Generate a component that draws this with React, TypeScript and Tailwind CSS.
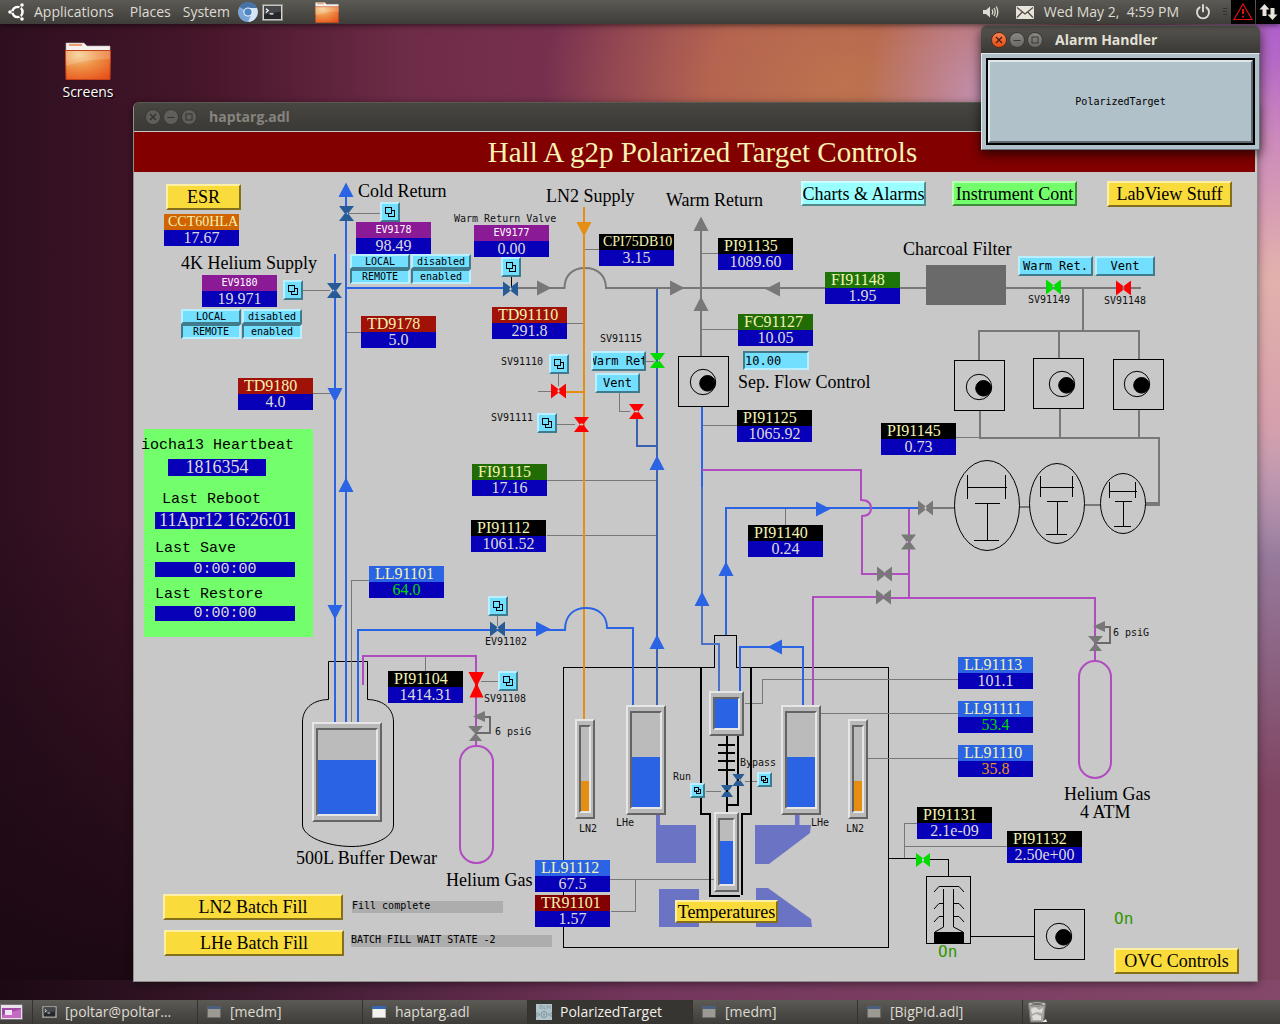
import React from "react";

const SERIF = "font-['Liberation_Serif',serif]";
const MONO = "font-['DejaVu_Sans_Mono',monospace]";
const UI = "font-['Open_Sans','Noto_Sans',sans-serif]";

const BLUE = "#2a63e4";
const DEEP = "#3a60b4";
const MID = "#4a70c8";
const NAVY = "#285a96";
const GRAY = "#787878";
const ORANGE = "#e48f14";
const MAGENTA = "#b04bc0";

/* ---------- window chrome ---------- */

function WindowDots({ active }: { active?: boolean }) {
  const grey = active
    ? "border-[#3a3935] bg-gradient-to-b from-[#8a8882] to-[#6b6963] text-[#3a3935]"
    : "border-[#3a3935] bg-[#5f5e59] text-[#33322e]";
  const close = active
    ? "border-[#5a2a18] bg-gradient-to-b from-[#f4804f] to-[#e2500f] text-[#4a1a08]"
    : grey;
  const dot = "flex size-4 items-center justify-center rounded-full border";
  return (
    <div className="flex gap-0.5">
      <button aria-label="Close" className={`${dot} ${close}`}>
        <svg width="8" height="8" viewBox="0 0 8 8" stroke="currentColor" strokeWidth="1.3">
          <path d="M1 1L7 7M7 1L1 7" />
        </svg>
      </button>
      <button aria-label="Minimize" className={`${dot} ${grey}`}>
        <svg width="8" height="8" viewBox="0 0 8 8" stroke="currentColor">
          <path d="M0.5 4.5H7.5" />
        </svg>
      </button>
      <button aria-label="Maximize" className={`${dot} ${grey}`}>
        <svg width="8" height="8" viewBox="0 0 8 8" fill="none" stroke="currentColor">
          <rect x="1" y="1" width="6" height="6" />
        </svg>
      </button>
    </div>
  );
}

/* ---------- panel icons ---------- */

function UbuntuLogo() {
  return (
    <svg width="18" height="18" viewBox="0 0 18 18" fill="none">
      <circle cx="9.5" cy="9" r="5" stroke="#fff" strokeWidth="2.6" />
      <path d="M9.5 9L3 9M9.5 9L12.8 3.3M9.5 9L12.8 14.7" stroke="#4b4a46" strokeWidth="1.4" />
      <circle cx="9.5" cy="9" r="3.4" fill="#4b4a46" />
      <circle cx="2" cy="9" r="1.8" fill="#fff" />
      <circle cx="14" cy="2" r="1.8" fill="#fff" />
      <circle cx="14" cy="16" r="1.8" fill="#fff" />
    </svg>
  );
}

function ChromiumIcon() {
  return (
    <svg width="20" height="20" viewBox="0 0 20 20">
      <circle cx="10" cy="10" r="9.8" fill="#8fb6e0" />
      <path d="M10 10L1.5 5A9.8 9.8 0 0 1 19 6H10Z" fill="#4673a8" />
      <path d="M10 6H19A9.8 9.8 0 0 1 10 19.8L13.5 12Z" fill="#d2e4f6" />
      <path d="M1.5 5A9.8 9.8 0 0 0 10 19.8L13 13L7 12.5Z" fill="#79a5d6" />
      <circle cx="10" cy="10" r="4.6" fill="#e9f2fb" />
      <circle cx="10" cy="10" r="3.6" fill="#4f86c6" />
    </svg>
  );
}

function TerminalIcon({ w, h }: { w: number; h: number }) {
  return (
    <svg width={w} height={h} viewBox="0 0 22 18">
      <rect x="0.5" y="0.5" width="21" height="17" fill="#d9d9d6" stroke="#8b8b88" />
      <rect x="2" y="2" width="18" height="14" fill="#26272a" />
      <path d="M2 2H20V8L2 11Z" fill="#45474b" />
      <path d="M4 5L6.5 7L4 9M8 10.5H12" stroke="#fff" strokeWidth="1.2" fill="none" />
    </svg>
  );
}

function FolderIcon({ w, h }: { w: number; h: number }) {
  return (
    <svg width={w} height={h} viewBox="0 0 46 38" preserveAspectRatio="none">
      <defs>
        <radialGradient id="folder" cx="0.3" cy="0.15" r="1">
          <stop offset="0" stopColor="#f6cd8e" />
          <stop offset="0.45" stopColor="#ee8f45" />
          <stop offset="1" stopColor="#e8501a" />
        </radialGradient>
      </defs>
      <path d="M1 20V1H19L22 4H45V20Z" fill="#f4f1ee" stroke="#b9b2ac" strokeWidth="0.6" />
      <rect x="4" y="2" width="13" height="2" fill="#ef9c6c" />
      <path d="M0.5 8.5H45.5L45 37.5H1Z" fill="url(#folder)" stroke="#c4421a" />
      <path d="M1 9H45V17Q22 17 1 24Z" fill="#fff" opacity="0.18" />
    </svg>
  );
}

function VolumeIcon() {
  return (
    <svg width="18" height="14" viewBox="0 0 18 14" fill="none" stroke="#dfdbd2">
      <path d="M1 5H4L8 1.5V12.5L4 9H1Z" fill="#dfdbd2" stroke="none" />
      <path d="M10 4.5Q11.5 7 10 9.5M12 3Q14.4 7 12 11M14.2 1.5Q17.4 7 14.2 12.5" strokeWidth="1.3" />
    </svg>
  );
}

function MailIcon() {
  return (
    <svg width="18" height="13" viewBox="0 0 18 13">
      <rect width="18" height="13" rx="1" fill="#e8e4da" />
      <path d="M1 1.5L9 8L17 1.5M1 11.5L6.3 6M17 11.5L11.7 6" stroke="#4b4a46" strokeWidth="1.2" fill="none" />
    </svg>
  );
}

function PowerIcon() {
  return (
    <svg width="16" height="16" viewBox="0 0 16 16" fill="none" stroke="#dfdbd2" strokeWidth="1.9">
      <path d="M4.6 3.4A6 6 0 1 0 11.4 3.4M8 1V7.5" strokeLinecap="round" />
    </svg>
  );
}

function TopPanel() {
  return (
    <header className={`${UI} relative z-20 flex h-6 shrink-0 items-center bg-gradient-to-b from-[#5b5a55] to-[#3e3d39] text-sm text-[#dfdbd2] shadow-[0_1px_6px_rgba(0,0,0,0.6)]`}>
      <nav className="flex items-center pl-2">
        <UbuntuLogo />
        <button className="ml-2">Applications</button>
        <button className="ml-4">Places</button>
        <button className="ml-3">System</button>
        <button className="ml-2" aria-label="Chromium"><ChromiumIcon /></button>
        <button className="ml-1" aria-label="Terminal"><TerminalIcon w={21} h={17} /></button>
        <button className="ml-8" aria-label="File manager"><FolderIcon w={24} h={21} /></button>
      </nav>
      <div className="ml-auto flex items-center">
        <button aria-label="Volume"><VolumeIcon /></button>
        <button className="ml-4" aria-label="Mail"><MailIcon /></button>
        <time className="ml-2.5 whitespace-pre">Wed May 2,  4:59 PM</time>
        <button className="ml-4" aria-label="Power"><PowerIcon /></button>
        <svg className="ml-3" width="4" height="10" viewBox="0 0 4 10" stroke="#33322e">
          <path d="M0 1.5H4M0 4.5H4M0 7.5H4" />
        </svg>
        <button className="ml-1 flex size-6 items-center justify-center bg-black" aria-label="Alert">
          <svg width="20" height="18" viewBox="0 0 20 18" fill="none" stroke="#e01010">
            <path d="M10 1L19 16.5H1Z" strokeWidth="1.2" />
            <path d="M10 6V11M10 12.8V14.6" strokeWidth="2" />
          </svg>
        </button>
        <button className="ml-px flex size-6 items-center justify-center bg-black" aria-label="Network">
          <svg width="19" height="18" viewBox="0 0 19 18" fill="#e8e4da">
            <path d="M5.5 1L10.5 6.5H7.5V13H3.5V6.5H0.5Z" />
            <path d="M13.5 17L8.5 11.5H11.5V5H15.5V11.5H18.5Z" />
          </svg>
        </button>
      </div>
    </header>
  );
}

/* ---------- taskbar ---------- */

function WindowIcon({ dim }: { dim?: boolean }) {
  return (
    <svg width="14" height="12" viewBox="0 0 14 12">
      <rect x="0.5" y="0.5" width="13" height="11" fill={dim ? "#9b9a95" : "#f2f1ee"} stroke={dim ? "#6b6a66" : "#b5b4b0"} />
      <rect width="14" height="3" fill={dim ? "#4c5f7c" : "#3567b0"} />
    </svg>
  );
}

function AlarmIcon() {
  return (
    <svg width="16" height="16" viewBox="0 0 16 16">
      <rect width="16" height="16" fill="#b0c4cc" />
      <path d="M4 1.5V5M4 1.5H6V5M8 1.5V5H9.5M11 5V1.5L12.5 3.5L14 1.5V5" stroke="#8398a2" fill="none" strokeWidth="0.8" />
      <circle cx="8" cy="10.5" r="3" fill="none" stroke="#7b909a" />
      <circle cx="8" cy="10.5" r="1" fill="#7b909a" />
      <path d="M1 8V13M3 9V12M13 9V12M15 8V13" stroke="#8398a2" />
    </svg>
  );
}

function Task({ icon, title, active }: { icon: React.ReactNode; title: string; active?: boolean }) {
  return (
    <button
      className={`flex h-6 w-[165px] items-center gap-2 border-l border-[#33322e] pl-2 text-left ${
        active ? "bg-[#363531] text-[#f2efe8]" : ""
      }`}
    >
      <span className="flex w-4 justify-center">{icon}</span>
      <span className="min-w-0 whitespace-nowrap">{title}</span>
    </button>
  );
}

function Taskbar() {
  return (
    <footer className={`${UI} flex h-6 shrink-0 items-center bg-gradient-to-b from-[#5b5a55] to-[#3e3d39] text-sm text-[#dfdbd2]`}>
      <button aria-label="Show desktop" className="mr-2 flex w-6 justify-start">
        <svg width="23" height="18" viewBox="0 0 23 18">
          <rect x="0.5" y="1.5" width="22" height="15" fill="#e9e2ea" stroke="#77707a" />
          <rect x="2" y="5" width="19" height="10" fill="#a04aa6" />
          <path d="M2 12L21 6V15H2Z" fill="#c46ac0" />
          <rect x="5" y="7" width="7" height="5" fill="#f3e4f3" />
        </svg>
      </button>
      <Task icon={<TerminalIcon w={15} h={12} />} title="[poltar@poltar…" />
      <Task icon={<WindowIcon dim />} title="[medm]" />
      <Task icon={<WindowIcon />} title="haptarg.adl" />
      <Task icon={<AlarmIcon />} title="PolarizedTarget" active />
      <Task icon={<WindowIcon dim />} title="[medm]" />
      <Task icon={<WindowIcon dim />} title="[BigPid.adl]" />
      <button aria-label="Trash" className="flex h-6 items-center border-l border-[#33322e] pl-1">
        <svg width="21" height="22" viewBox="0 0 21 22">
          <path d="M1.5 3H18.5L16.5 21H3.5Z" fill="#a9a9a5" stroke="#75746f" />
          <path d="M4 8L8 6L12 9L16 7L15 12L10 11L5 13ZM5 15L9 13L14 15L14 19H6Z" fill="#dddcd8" />
          <ellipse cx="10" cy="3" rx="9" ry="2" fill="#d5d4d0" stroke="#75746f" />
          <ellipse cx="10" cy="3" rx="6" ry="1" fill="#6b6a66" />
          <path d="M15 21L20 21L19 18Z" fill="#efeeea" />
        </svg>
      </button>
    </footer>
  );
}

/* ---------- control widgets ---------- */

const tones = {
  yellow: "bg-[#fadb3c] border-t-[#fdf0a4] border-l-[#fdf0a4] border-b-[#84701c] border-r-[#84701c]",
  aqua: "bg-[#99ffff] border-t-[#ccffff] border-l-[#ccffff] border-b-[#508c8c] border-r-[#508c8c]",
  green: "bg-[#73ff6b] border-t-[#b9ffb5] border-l-[#b9ffb5] border-b-[#3f8c3a] border-r-[#3f8c3a]",
  cyan: "bg-[#73dfff] border-t-[#b9efff] border-l-[#b9efff] border-b-[#3f7b8c] border-r-[#3f7b8c]",
};

function Push({ at, tone, children }: { at: string; tone: keyof typeof tones; children: React.ReactNode }) {
  return (
    <button className={`${SERIF} absolute flex items-center justify-center overflow-hidden border-2 text-lg leading-4 whitespace-nowrap text-black ${tones[tone]} ${at}`}>
      {children}
    </button>
  );
}

function SmallPush({ at, children }: { at: string; children: React.ReactNode }) {
  return (
    <button className={`${MONO} absolute flex h-5 items-center justify-center overflow-hidden border-2 text-xs leading-4 whitespace-nowrap text-black ${tones.cyan} ${at}`}>
      {children}
    </button>
  );
}

function Popup({ at, name, small }: { at: string; name: string; small?: boolean }) {
  return (
    <button aria-label={name} className={`absolute flex items-center justify-center border-2 ${small ? "size-[15px]" : "size-5"} ${tones.cyan} ${at}`}>
      {small ? (
        <svg width="7" height="7" viewBox="0 0 7 7" fill="none" stroke="#000" shapeRendering="crispEdges">
          <rect x="0.5" y="0.5" width="4" height="4" />
          <path d="M4.5 2.5H6.5V6.5H2.5V2.5" />
        </svg>
      ) : (
        <svg width="10" height="10" viewBox="0 0 10 10" fill="none" stroke="#000" shapeRendering="crispEdges">
          <rect x="0.5" y="0.5" width="6" height="6" />
          <path d="M6.5 3.5H9.5V9.5H3.5V6.5" />
        </svg>
      )}
    </button>
  );
}

function Mode({ at }: { at: string }) {
  const cell = "h-[15px] border-2 text-[10px] leading-[11px] text-black bg-[#73dfff]";
  const up = "border-t-[#b9efff] border-l-[#b9efff] border-b-[#3f7b8c] border-r-[#3f7b8c]";
  const down = "border-t-[#3f7b8c] border-l-[#3f7b8c] border-b-[#b9efff] border-r-[#b9efff]";
  return (
    <div className={`${MONO} absolute grid w-[121px] grid-cols-2 gap-x-px ${at}`}>
      <button className={`${cell} ${up}`}>LOCAL</button>
      <button className={`${cell} ${up}`}>disabled</button>
      <button className={`${cell} ${down}`}>REMOTE</button>
      <button className={`${cell} ${down}`}>enabled</button>
    </div>
  );
}

function Tag({ at, name, value, bg, valueColor = "text-[#dcdcdc]", small, wide }: {
  at: string;
  name: string;
  value: string;
  bg: string;
  valueColor?: string;
  small?: boolean;
  wide?: boolean;
}) {
  const nameStyle = small
    ? `${MONO} text-center text-[10px] text-white`
    : `${SERIF} text-[#f3f3b4] ${wide ? "pl-1 text-sm" : "pl-1.5 text-base"}`;
  return (
    <div className={`absolute w-[75px] ${at}`}>
      <div className={`h-4 leading-4 whitespace-nowrap ${bg} ${nameStyle}`}>
        {name}
      </div>
      <div className={`${SERIF} h-4 bg-[#0800b8] text-center text-base leading-4 ${valueColor}`}>{value}</div>
    </div>
  );
}

function Label({ at, children }: { at: string; children: React.ReactNode }) {
  return <span className={`${SERIF} absolute text-lg leading-4 whitespace-nowrap text-black ${at}`}>{children}</span>;
}

function Tiny({ at, children }: { at: string; children: React.ReactNode }) {
  return <span className={`${MONO} absolute text-[10px] leading-3 whitespace-nowrap text-[#111] ${at}`}>{children}</span>;
}

function Gauge({ at, level, fill, name }: { at: string; level: number; fill: string; name: string }) {
  return (
    <div
      role="meter"
      aria-label={name}
      aria-valuenow={level}
      aria-valuemin={0}
      aria-valuemax={100}
      className={`absolute flex border-2 border-t-[#e6e6e6] border-r-[#646464] border-b-[#646464] border-l-[#e6e6e6] bg-[#b9b9b9] px-0.5 py-1 ${at}`}
    >
      <div className="flex flex-1 items-end border-2 border-t-[#646464] border-r-[#e6e6e6] border-b-[#e6e6e6] border-l-[#646464] bg-[#bbb]">
        <div className={`w-full ${fill}`} style={{ height: `${level}%` }} />
      </div>
    </div>
  );
}

function Heartbeat() {
  const text = "font-['Liberation_Mono',monospace] text-[15px] leading-4 whitespace-nowrap text-black";
  const time = "font-['Liberation_Mono',monospace] h-[15px] bg-[#0800b8] text-center text-[15px] leading-[15px] text-[#dcdcdc]";
  const value = `${SERIF} h-[17px] bg-[#0800b8] text-center text-lg leading-[17px] text-[#dcdcdc]`;
  return (
    <section className="absolute top-[257px] left-[10px] flex h-[208px] w-[169px] flex-col bg-[#73ff6b] px-[11px] pt-[9px]">
      <h2 className={`${text} -ml-3.5`}>iocha13 Heartbeat</h2>
      <div className={`${value} mx-[13px] mt-[5px] w-[98px]`}>1816354</div>
      <h2 className={`${text} mt-4 pl-[7px]`}>Last Reboot</h2>
      <div className={`${value} mt-1 w-[140px]`}>11Apr12 16:26:01</div>
      <h2 className={`${text} mt-3`}>Last Save</h2>
      <div className={`${time} mt-[5px] w-[140px]`}>0:00:00</div>
      <h2 className={`${text} mt-2.5`}>Last Restore</h2>
      <div className={`${time} mt-[3px] w-[140px]`}>0:00:00</div>
    </section>
  );
}

/* ---------- diagram drawing ---------- */

type Dir = "up" | "down" | "left" | "right";

function Arrow({ x, y, dir, c }: { x: number; y: number; dir: Dir; c: string }) {
  const turn = { up: 0, right: 90, down: 180, left: 270 }[dir];
  return <path d="M0 -7.5L7.5 7H-7.5Z" fill={c} transform={`translate(${x} ${y}) rotate(${turn})`} />;
}

function Valve({ x, y, c, upright, r = 7.5 }: { x: number; y: number; c: string; upright?: boolean; r?: number }) {
  return (
    <path
      d={`M${-r} ${-r}L1 -1V1L${-r} ${r}ZM${r} ${-r}L-1 -1V1L${r} ${r}Z`}
      fill={c}
      transform={`translate(${x} ${y}) rotate(${upright ? 90 : 0})`}
    />
  );
}

function Pump({ x, y, cx, cy }: { x: number; y: number; cx: number; cy: number }) {
  return (
    <g stroke="#000" fill="none">
      <rect x={x + 0.5} y={y + 0.5} width="50" height="50" />
      <circle cx={x + cx} cy={y + cy} r="12.7" />
      <circle cx={x + cx + 4.5} cy={y + cy + 1.3} r="7.8" fill="#000" />
    </g>
  );
}

function Pipe({ d, c, w = 2 }: { d: string; c: string; w?: number }) {
  return <path d={d} stroke={c} strokeWidth={w} fill="none" />;
}

function Regulator({ x, y }: { x: number; y: number }) {
  return (
    <g transform={`translate(${x} ${y})`} fill={GRAY}>
      <path d="M12 6H17V22H3" fill="none" stroke="#6a6a6a" strokeWidth="2" />
      <path d="M0 5.5L12 0V11Z" />
      <path d="M-5 15H10L2.5 23ZM-4 30H9L2.5 22Z" />
    </g>
  );
}

function Plumbing() {
  return (
    <svg className="absolute top-0 left-0" width="1122" height="808" viewBox="134 172 1122 808" aria-hidden="true">
      {/* magnet coils */}
      <g fill="#6b73c4">
        <path d="M656 815H660V825H696V863H656Z" />
        <rect x="659" y="889" width="40" height="38" />
        <path d="M795 815H799.5V825H811L810 833L769 864H755V825H795Z" />
        <path d="M756 888H768L811 919L812 927H756Z" />
      </g>

      {/* vessel outlines */}
      <g fill="none" stroke="#000" shapeRendering="crispEdges">
        <path d="M714.5 667.5H563.5V947.5H888.5V667.5H736.5V635.5H714.5Z" />
        <path d="M888 858.5H916M930 859.5H948.5V876" />
        <rect x="926.5" y="876.5" width="44" height="67" />
        <path d="M971 936.5H1034" />
      </g>
      <path d="M328.5 699.5V661.5H367.5V699.5C385 700 393.5 710 393.5 722V825C393.5 838 372 846.5 352 846.5C326 846.5 302.5 836 302.5 825V722C302.5 710 311 700 328.5 699.5" fill="none" stroke="#000" />

      {/* instrument leads */}
      <g fill="none" stroke={GRAY} shapeRendering="crispEdges">
        <path d="M347 332.5H361M313 393.5H335M303 290.5H330M348 213.5H380" />
        <path d="M567 323.5H584M583 249.5H599M702 253.5H718M702 329.5H738M646 361.5H654" />
        <path d="M558.5 374V386M538 391.5H552M619.5 393V411.5H630M557 424.5H575M702 425.5H737" />
        <path d="M547 480.5H657M547 535.5H657M497.5 616V626M425.5 657V671M481 681.5H498" />
        <path d="M369 580.5H351.5V722M785.5 509V525M956 437.5H980" />
        <path d="M745 703.5H762.5V679.5H958M821 713.5H958M868 758.5H958" />
        <path d="M610 879.5H714M611 911.5H635.5V880M904.5 858V823.5H917M904 846.5H1007" />
        <path d="M706 791.5H721M745 781.5H757" />
      </g>
      <path d="M511.5 277V287" stroke="#000" />

      {/* gas return */}
      <Pipe c={GRAY} d="M518 288H564.5C564.5 276 572 268 585 268C598 268 606 276 606 288H926M1006 288H1141" />
      <Pipe c={GRAY} d="M701 222V356" />
      <Pipe c={GRAY} d="M1083 288V331M979 360V331H1139V359M1059 331V358M980 410V438M1060 408V438M1139 409V438M979 438H1159V505" />
      <Pipe c={GRAY} d="M1146 504H1160" w={4} />
      <Pipe c={GRAY} d="M933 508H954M1020 507H1030M1085 505H1100" />
      <rect x="926" y="265" width="80" height="40" fill="#6a6a6a" />

      {/* nitrogen */}
      <Pipe c={ORANGE} d="M584 207V719M565 392H584" />

      {/* helium */}
      <Pipe c={BLUE} d="M335 254V722M346 190V722M346 288H504" />
      <Pipe c={DEEP} d="M657 289V705M637 418V446H657" />
      <Pipe c={BLUE} d="M702 407V487" />
      <Pipe c={MID} d="M702 487V644H719V691" />
      <Pipe c={BLUE} d="M726 635V508H919" />
      <Pipe c={BLUE} d="M358 722V630H565C565 615 574 608 586 608C598 608 607 615 607 628H633V705" />
      <Pipe c={BLUE} d="M740 691V647H803V705" />

      {/* gas supply */}
      <Pipe c={MAGENTA} d="M702 470H861V500C868 500 871 503 871 508.5C871 514 868 516 862 516V574H909" />
      <Pipe c={MAGENTA} d="M909 509V598M813 705V597H884V598H1095V661" />
      <Pipe c={MAGENTA} d="M363 685V656H476V746" />
      <g fill="none" stroke={MAGENTA} strokeWidth="2">
        <rect x="1079" y="661" width="32" height="117" rx="16" />
        <rect x="460" y="746" width="33" height="117" rx="16" />
      </g>
      <Regulator x={1093} y={621} />
      <Regulator x={473} y={711} />

      {/* cryostat tail */}
      <g fill="none" stroke="#000" strokeWidth="2" shapeRendering="crispEdges">
        <path d="M701 667V814H710V896H740M751 667V814H742V895" />
        <path d="M727 736V812M718 745H735M718 753H735M718 761H735M718 770H735M738 736V805H727" />
      </g>

      {/* roots pumps */}
      <g fill="none" stroke="#000">
        <ellipse cx="987" cy="505.5" rx="32.5" ry="45" />
        <ellipse cx="1057" cy="503.5" rx="27.5" ry="40" />
        <ellipse cx="1123" cy="503.5" rx="22.5" ry="30" />
        <g shapeRendering="crispEdges">
          <path d="M967.5 475V499M1005.5 475V499M967 487.5H1007M975 503.5H1000M987.5 503V540M974 540.5H999" />
          <path d="M1040.5 476V497M1072.5 476V497M1040 487.5H1074M1047 501.5H1068M1057.5 501V534M1046 534.5H1067" />
          <path d="M1109.5 482V498M1135.5 482V498M1109 491.5H1137M1115 501.5H1132M1123.5 501V526M1114 526.5H1131" />
        </g>
      </g>

      {/* turbo pump */}
      <rect x="934" y="932" width="30" height="12" />
      <path d="M943.5 889V927L935 932M953.5 889V927L963 932M934 892L939 886.5H959L964 892M943 903.5H939L934 909M954 903.5H959L964 909M943 916.5H939L934 922M954 916.5H959L964 922" fill="none" stroke="#000" />

      <Pump x={678} y={356} cx={25} cy={26} />
      <Pump x={954} y={360} cx={25} cy={27} />
      <Pump x={1033} y={358} cx={29} cy={26} />
      <Pump x={1113} y={359} cx={24} cy={25} />
      <Pump x={1034} y={909} cx={25} cy={27} />

      <Arrow x={346} y={190} dir="up" c={BLUE} />
      <Arrow x={346} y={485} dir="up" c={BLUE} />
      <Arrow x={335} y={395} dir="down" c={BLUE} />
      <Arrow x={335} y={612} dir="down" c={BLUE} />
      <Arrow x={584} y={229} dir="down" c={ORANGE} />
      <Arrow x={701} y={224} dir="up" c={GRAY} />
      <Arrow x={701} y={304} dir="up" c={GRAY} />
      <Arrow x={544} y={288} dir="right" c={GRAY} />
      <Arrow x={677} y={288} dir="right" c={GRAY} />
      <Arrow x={773} y={289} dir="left" c={GRAY} />
      <Arrow x={657} y={463} dir="up" c={BLUE} />
      <Arrow x={657} y={642} dir="up" c={BLUE} />
      <Arrow x={702} y={599} dir="up" c={BLUE} />
      <Arrow x={726} y={569} dir="up" c={BLUE} />
      <Arrow x={823} y={509} dir="right" c={BLUE} />
      <Arrow x={543} y={629} dir="right" c={BLUE} />
      <Arrow x={775} y={647} dir="left" c={BLUE} />

      <Valve x={346.5} y={213.5} c={NAVY} upright />
      <Valve x={334.5} y={290.5} c={NAVY} upright />
      <Valve x={510.5} y={289} c={NAVY} />
      <Valve x={497.5} y={629} c={NAVY} />
      <Valve x={738.5} y={780} c={NAVY} upright r={6} />
      <Valve x={727} y={791} c={NAVY} upright r={6} />
      <Valve x={558.5} y={391} c="#ff0000" />
      <Valve x={581.5} y={424.5} c="#ff0000" upright />
      <Valve x={636.5} y={411.5} c="#ff0000" upright />
      <Valve x={1123.5} y={288} c="#ff0000" />
      <path d="M468.5 672H484L478 684V686L483.5 697.5H469.5L475 686V684Z" fill="#ff0000" />
      <Valve x={657.5} y={360.5} c="#00dc00" upright />
      <Valve x={1053.5} y={287} c="#00dc00" />
      <Valve x={923} y={860} c="#00dc00" r={7} />
      <Valve x={925.5} y={508} c={GRAY} />
      <Valve x={908.5} y={542} c={GRAY} upright />
      <Valve x={884.5} y={574} c={GRAY} />
      <Valve x={883.5} y={597} c={GRAY} />
    </svg>
  );
}

function Diagram() {
  return (
    <div className="relative min-h-0 flex-1 overflow-hidden bg-[#c8c8c8]">
      <Plumbing />

      <Push at="top-[12px] left-[32px] h-[26px] w-[75px]" tone="yellow">ESR</Push>
      <Push at="top-[9px] left-[667px] h-[25px] w-[125px]" tone="aqua">Charts &amp; Alarms</Push>
      <Push at="top-[9px] left-[818px] h-[25px] w-[125px]" tone="green">Instrument Cont</Push>
      <Push at="top-[9px] left-[973px] h-[26px] w-[125px]" tone="yellow">LabView Stuff</Push>
      <Push at="top-[722px] left-[29px] h-[26px] w-[180px]" tone="yellow">LN2 Batch Fill</Push>
      <Push at="top-[758px] left-[30px] h-[26px] w-[180px]" tone="yellow">LHe Batch Fill</Push>
      <Push at="top-[776px] left-[980px] h-[26px] w-[125px]" tone="yellow">OVC Controls</Push>

      <Tag at="top-[42px] left-[30px]" name="CCT60HLA" value="17.67" bg="bg-[#d06400]" wide />
      <Tag at="top-[103px] left-[68px]" name="EV9180" value="19.971" bg="bg-[#8b1a96]" small />
      <Tag at="top-[50px] left-[222px]" name="EV9178" value="98.49" bg="bg-[#8b1a96]" small />
      <Tag at="top-[53px] left-[340px]" name="EV9177" value="0.00" bg="bg-[#8b1a96]" small />
      <Tag at="top-[206px] left-[104px]" name="TD9180" value="4.0" bg="bg-[#a01208]" />
      <Tag at="top-[144px] left-[227px]" name="TD9178" value="5.0" bg="bg-[#a01208]" />
      <Tag at="top-[135px] left-[358px]" name="TD91110" value="291.8" bg="bg-[#a01208]" />
      <Tag at="top-[62px] left-[465px]" name="CPI75DB10" value="3.15" bg="bg-black" wide />
      <Tag at="top-[66px] left-[584px]" name="PI91135" value="1089.60" bg="bg-black" />
      <Tag at="top-[100px] left-[691px]" name="FI91148" value="1.95" bg="bg-[#1e7309]" />
      <Tag at="top-[142px] left-[604px]" name="FC91127" value="10.05" bg="bg-[#226c05]" />
      <Tag at="top-[238px] left-[603px]" name="PI91125" value="1065.92" bg="bg-black" />
      <Tag at="top-[251px] left-[747px]" name="PI91145" value="0.73" bg="bg-black" />
      <Tag at="top-[292px] left-[338px]" name="FI91115" value="17.16" bg="bg-[#226c05]" />
      <Tag at="top-[348px] left-[337px]" name="PI91112" value="1061.52" bg="bg-black" />
      <Tag at="top-[353px] left-[614px]" name="PI91140" value="0.24" bg="bg-black" />
      <Tag at="top-[394px] left-[235px]" name="LL91101" value="64.0" bg="bg-[#2a63e4]" valueColor="text-[#00d800]" />
      <Tag at="top-[499px] left-[254px]" name="PI91104" value="1414.31" bg="bg-black" />
      <Tag at="top-[485px] left-[824px]" name="LL91113" value="101.1" bg="bg-[#2a63e4]" />
      <Tag at="top-[529px] left-[824px]" name="LL91111" value="53.4" bg="bg-[#2a63e4]" valueColor="text-[#00d800]" />
      <Tag at="top-[573px] left-[824px]" name="LL91110" value="35.8" bg="bg-[#2a63e4]" valueColor="text-[#e8941c]" />
      <Tag at="top-[635px] left-[783px]" name="PI91131" value="2.1e-09" bg="bg-black" />
      <Tag at="top-[659px] left-[873px]" name="PI91132" value="2.50e+00" bg="bg-black" />
      <Tag at="top-[688px] left-[401px]" name="LL91112" value="67.5" bg="bg-[#2a63e4]" />
      <Tag at="top-[723px] left-[401px]" name="TR91101" value="1.57" bg="bg-[#820000]" />

      <Mode at="top-[137px] left-[47px]" />
      <Mode at="top-[82px] left-[216px]" />

      <SmallPush at="top-[179px] left-[457px] w-[55px]">Warm Ret</SmallPush>
      <SmallPush at="top-[201px] left-[461px] w-[45px]">Vent</SmallPush>
      <SmallPush at="top-[84px] left-[884px] w-[75px]">Warm Ret.</SmallPush>
      <SmallPush at="top-[84px] left-[961px] w-[60px]">Vent</SmallPush>
      <input
        aria-label="Sep. Flow Control"
        defaultValue="10.00"
        className={`${MONO} absolute top-[179px] left-[609px] h-[19px] w-[66px] border-2 border-t-[#3f7b8c] border-r-[#b9efff] border-b-[#b9efff] border-l-[#3f7b8c] bg-[#73dfff] text-xs leading-4 text-black`}
      />

      <Popup at="top-[30px] left-[246px]" name="EV9178" />
      <Popup at="top-[108px] left-[149px]" name="EV9180" />
      <Popup at="top-[85px] left-[367px]" name="EV9177" />
      <Popup at="top-[182px] left-[415px]" name="SV91110" />
      <Popup at="top-[241px] left-[403px]" name="SV91111" />
      <Popup at="top-[424px] left-[354px]" name="EV91102" />
      <Popup at="top-[499px] left-[364px]" name="SV91108" />
      <Popup at="top-[611px] left-[556px]" name="Run" small />
      <Popup at="top-[600px] left-[623px]" name="Bypass" small />

      <Label at="top-[11px] left-[224px]">Cold Return</Label>
      <Label at="top-[83px] left-[47px]">4K Helium Supply</Label>
      <Label at="top-[16px] left-[412px]">LN2 Supply</Label>
      <Label at="top-[20px] left-[532px]">Warm Return</Label>
      <Label at="top-[69px] left-[769px]">Charcoal Filter</Label>
      <Label at="top-[202px] left-[604px]">Sep. Flow Control</Label>
      <Label at="top-[678px] left-[162px]">500L Buffer Dewar</Label>
      <Label at="top-[700px] left-[312px]">Helium Gas</Label>
      <Label at="top-[614px] left-[930px]">Helium Gas</Label>
      <Label at="top-[632px] left-[946px]">4 ATM</Label>
      <span className={`${MONO} absolute top-[772px] left-[804px] text-base leading-4 text-[#2f9600]`}>On</span>
      <span className={`${MONO} absolute top-[739px] left-[980px] text-base leading-4 text-[#2f9600]`}>On</span>

      <Tiny at="top-[41px] left-[320px]">Warm Return Valve</Tiny>
      <Tiny at="top-[184px] left-[367px]">SV91110</Tiny>
      <Tiny at="top-[240px] left-[357px]">SV91111</Tiny>
      <Tiny at="top-[161px] left-[466px]">SV91115</Tiny>
      <Tiny at="top-[122px] left-[894px]">SV91149</Tiny>
      <Tiny at="top-[123px] left-[970px]">SV91148</Tiny>
      <Tiny at="top-[464px] left-[351px]">EV91102</Tiny>
      <Tiny at="top-[521px] left-[350px]">SV91108</Tiny>
      <Tiny at="top-[554px] left-[361px]">6 psiG</Tiny>
      <Tiny at="top-[455px] left-[979px]">6 psiG</Tiny>
      <Tiny at="top-[651px] left-[445px]">LN2</Tiny>
      <Tiny at="top-[645px] left-[482px]">LHe</Tiny>
      <Tiny at="top-[645px] left-[677px]">LHe</Tiny>
      <Tiny at="top-[651px] left-[712px]">LN2</Tiny>
      <Tiny at="top-[599px] left-[539px]">Run</Tiny>
      <Tiny at="top-[585px] left-[606px]">Bypass</Tiny>

      <Gauge name="Buffer dewar" at="top-[550px] left-[178px] h-[100px] w-[70px]" level={64} fill="bg-[#2a63e4]" />
      <Gauge name="LN2 left" at="top-[547px] left-[441px] h-[100px] w-5" level={36} fill="bg-[#e48f14]" />
      <Gauge name="LHe left" at="top-[533px] left-[492px] h-[110px] w-10" level={53} fill="bg-[#2a63e4]" />
      <Gauge name="Separator" at="top-[519px] left-[575px] h-[45px] w-[35px]" level={100} fill="bg-[#2a63e4]" />
      <Gauge name="LHe right" at="top-[533px] left-[647px] h-[110px] w-10" level={53} fill="bg-[#2a63e4]" />
      <Gauge name="LN2 right" at="top-[547px] left-[714px] h-[100px] w-5" level={36} fill="bg-[#e48f14]" />
      <Gauge name="Target nose" at="top-[640px] left-[580px] h-20 w-[25px]" level={67} fill="bg-[#2a63e4]" />

      <Push at="top-[728px] left-[541px] h-[23px] w-[103px]" tone="yellow">Temperatures</Push>

      <output className={`${MONO} absolute top-[729px] left-[218px] h-3 w-[151px] bg-[#adadad] text-[10px] leading-[10px] text-black`}>Fill complete</output>
      <output className={`${MONO} absolute top-[763px] left-[217px] h-3 w-[201px] bg-[#adadad] text-[10px] leading-[10px] text-black`}>BATCH FILL WAIT STATE -2</output>

      <Heartbeat />
    </div>
  );
}

export default function App() {
  return (
    <div className="flex h-screen flex-col overflow-hidden bg-[#3a1428]">
      <TopPanel />
      <main className="relative min-h-0 flex-1 overflow-hidden bg-[radial-gradient(ellipse_180px_260px_at_100%_0%,#b060d0_0%,rgba(192,112,200,0.5)_45%,transparent_100%),radial-gradient(ellipse_170px_300px_at_100%_24%,#e4b4ac_0%,#d6a0ac_55%,transparent_100%),radial-gradient(ellipse_220px_360px_at_100%_42%,#a396bc_0%,transparent_100%),radial-gradient(ellipse_120px_160px_at_77%_8%,#c493b4_0%,transparent_100%),radial-gradient(ellipse_300px_220px_at_66%_6%,#bd734e_0%,#b46450_45%,transparent_100%),linear-gradient(90deg,#2d0f20_0%,#47162a_16%,#6e2c48_32%,#84385a_60%,#7e4460_100%)]">
        <div className="absolute bottom-0 left-0 h-1/2 w-1/4 bg-gradient-to-b from-transparent to-[#1a0812]" />
        <div className="absolute inset-x-0 bottom-0 h-5 bg-gradient-to-r from-[#1c0913] via-[#74365c] to-[#84486a]" />
        <a href="#screens" className={`${UI} absolute top-[18px] left-12 flex w-20 flex-col items-center gap-0.5 text-sm text-white [text-shadow:1px_1px_1px_#000]`}>
          <FolderIcon w={46} h={38} />
          <span>Screens</span>
        </a>

        <section className="absolute top-[78px] right-[22px] bottom-[18px] left-[133px] flex flex-col overflow-hidden rounded-t-md border border-t-0 border-[#8f8e8a] shadow-[0_2px_8px_rgba(0,0,0,0.45)]">
          <div className="-mx-px flex h-[29px] shrink-0 items-center gap-3 rounded-t-md border-t border-[#5a5954] bg-gradient-to-b from-[#474641] to-[#3a3935] pl-3">
            <WindowDots />
            <h1 className={`${UI} text-sm font-bold text-[#86847d]`}>haptarg.adl</h1>
          </div>
          <div className="shrink-0 bg-[#c8c8c8] pt-px pr-0.5">
            <h2 className={`${SERIF} flex h-10 items-center justify-center bg-[#820000] pl-4 text-[29px] leading-8 whitespace-nowrap text-[#f6f3b4]`}>
              Hall A g2p Polarized Target Controls
            </h2>
          </div>
          <Diagram />
        </section>

        <section className="absolute top-px right-5 w-[279px] rounded-t-md shadow-[0_4px_12px_rgba(0,0,0,0.7)]">
          <div className="flex h-7 items-center gap-3 rounded-t-md border-t border-[#6a6964] bg-gradient-to-b from-[#55544f] to-[#3a3935] pl-2.5">
            <WindowDots active />
            <h2 className={`${UI} text-sm font-bold text-[#e4e0d8]`}>Alarm Handler</h2>
          </div>
          <div className="border border-t-[#e0e8ec] border-r-[#6a747a] border-b-[#6a747a] border-l-[#e0e8ec] bg-[#b0c1c9] p-1">
            <button className={`${MONO} block h-[87px] w-full border-2 border-black text-[10px] text-black`}>
              <span className="flex h-full items-center justify-center border-2 border-t-[#dfe8ec] border-r-[#5e6a70] border-b-[#5e6a70] border-l-[#dfe8ec]">
                PolarizedTarget
              </span>
            </button>
          </div>
        </section>
      </main>
      <Taskbar />
    </div>
  );
}
